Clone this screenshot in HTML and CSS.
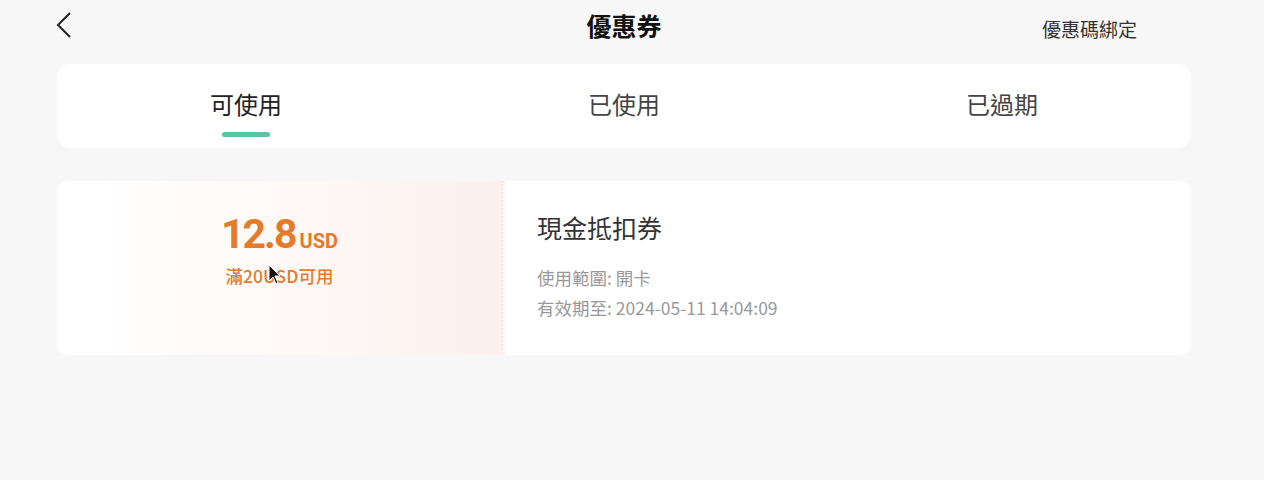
FILE: index.html
```html
<!DOCTYPE html>
<html lang="zh-Hant">
<head>
    <meta charset="UTF-8">
    <meta name="viewport" content="width=device-width, initial-scale=1.0">
    <title>優惠券</title>
    <link rel="stylesheet" href="styles.css">
</head>
<body>

    <!-- Top bar -->
    <header class="topbar">
        <a class="back" href="#">
            <svg width="18" height="28" viewBox="0 0 18 28"><path d="M15 2 L3 14 L15 26" fill="none" stroke="#222" stroke-width="2"/></svg>
        </a>
        <h1 class="title">優惠券</h1>
        <a class="bind" href="#">優惠碼綁定</a>
    </header>

    <!-- Tabs -->
    <nav class="tabs">
        <div class="tab active">可使用</div>
        <div class="tab">已使用</div>
        <div class="tab">已過期</div>
    </nav>

    <!-- Coupon list -->
    <div class="coupon">
        <div class="coupon-left">
            <div class="amount"><span class="num">12.8</span><span class="unit">USD</span></div>
            <div class="cond">滿20USD可用</div>
        </div>
        <div class="coupon-right">
            <div class="c-name">現金抵扣券</div>
            <div class="c-info">使用範圍: 開卡</div>
            <div class="c-info">有效期至: 2024-05-11 14:04:09</div>
        </div>
        <svg class="cursor" width="14" height="22" viewBox="0 0 14 22"><path d="M1 1 L1 17 L5 13 L8 20 L10 19 L7 12 L12 12 Z" fill="#111" stroke="#fff" stroke-width="1"/></svg>
    </div>

</body>
</html>
```

FILE: styles.css
```css
body {
    margin: 0;
    background-color: #f7f7f7;
    font-family: "Noto Sans CJK TC", "Noto Sans", sans-serif;
    color: #333;
}

.topbar {
    display: flex;
    align-items: center;
    justify-content: space-between;
    height: 56px;
    padding: 0 127px 0 55px;
    position: relative;
}

.back {
    display: flex;
    width: 18px;
    margin-top: -6px;
}

.title {
    position: absolute;
    left: 0;
    right: 16px;
    top: 7px;
    margin: 0;
    text-align: center;
    font-size: 25px;
    font-weight: 700;
    color: #111;
    pointer-events: none;
}

.bind {
    font-size: 19px;
    color: #333;
    text-decoration: none;
}

.tabs {
    display: flex;
    margin: 8px 73px 0 57px;
    height: 84px;
    background-color: #fff;
    border-radius: 14px;
}

.tab {
    flex: 1;
    display: flex;
    flex-direction: column;
    align-items: center;
    padding-top: 24px;
    font-size: 24px;
    color: #444;
    line-height: 32px;
}

.tab.active {
    color: #222;
}

.tab.active::after {
    content: "";
    width: 48px;
    height: 5px;
    margin-top: 12px;
    border-radius: 3px;
    background-color: #5ac3a2;
}

.coupon {
    display: flex;
    margin: 33px 73px 0 57px;
    height: 174px;
    position: relative;
}

.coupon-left {
    width: 446px;
    display: flex;
    flex-direction: column;
    align-items: center;
    justify-content: center;
    padding-bottom: 36px;
    box-sizing: border-box;
    background: linear-gradient(90deg, #ffffff 0%, #fefbfa 40%, #fcf0ed 100%);
    border-radius: 10px 0 0 10px;
    border-right: 1px dotted #f2dcd6;
    color: #e37b2b;
}

.amount {
    display: flex;
    align-items: baseline;
    font-family: Roboto, sans-serif;
    font-weight: 700;
    line-height: 44px;
}

.num {
    font-size: 41px;
    letter-spacing: -2px;
}

.unit {
    font-size: 20px;
    margin-left: 4px;
}

.cond {
    font-size: 17.5px;
    margin-top: 0;
    font-weight: 500;
}

.coupon-right {
    flex: 1;
    margin-left: 2px;
    background-color: #fff;
    border-radius: 0 10px 10px 0;
    padding: 28px 32px;
}

.c-name {
    font-size: 25px;
    color: #333;
    margin-bottom: 18px;
}

.c-info {
    font-size: 17.5px;
    color: #999;
    line-height: 30px;
}

.cursor {
    position: absolute;
    left: 211px;
    top: 83px;
}
```
